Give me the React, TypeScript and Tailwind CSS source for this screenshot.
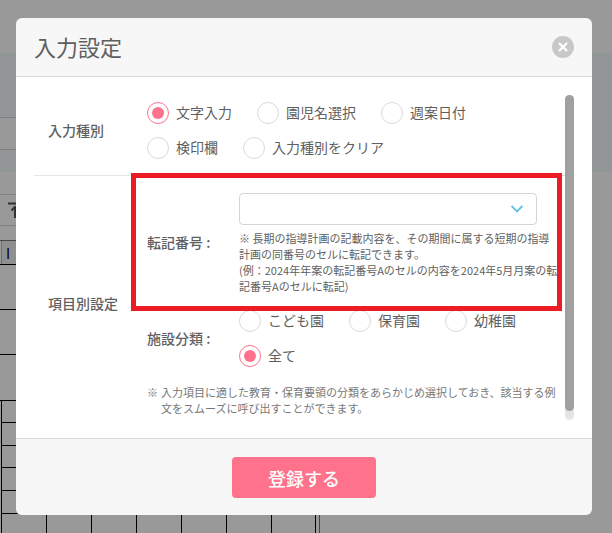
import React from 'react';
import { clsx } from 'clsx';

type RadioOption = {
  value: string;
  label: string;
};

type RadioListProps = {
  name: string;
  label: string;
  options: RadioOption[];
  defaultValue: string;
};

const INPUT_TYPES: RadioOption[] = [
  { value: 'text', label: '文字入力' },
  { value: 'child', label: '園児名選択' },
  { value: 'week', label: '週案日付' },
  { value: 'stamp', label: '検印欄' },
  { value: 'clear', label: '入力種別をクリア' },
];

const FACILITIES: RadioOption[] = [
  { value: 'kodomoen', label: 'こども園' },
  { value: 'hoikuen', label: '保育園' },
  { value: 'yochien', label: '幼稚園' },
  { value: 'all', label: '全て' },
];

const TRANSFER_NUMBERS = ['A', 'B', 'C', 'D', 'E'];

const ROW_HEIGHTS = ['h-[22px]', 'h-[23px]', 'h-[22px]', 'h-[23px]', 'h-[23px]'];

const RadioList = ({ name, label, options, defaultValue }: RadioListProps) => (
  <div
    role="radiogroup"
    aria-label={label}
    className="flex min-w-0 flex-1 flex-wrap gap-x-[25px] gap-y-[13px] pr-4"
  >
    {options.map((option) => (
      <label key={option.value} className="flex items-start gap-[7px] leading-5">
        <input
          type="radio"
          name={name}
          value={option.value}
          defaultChecked={option.value === defaultValue}
          className="peer sr-only"
        />
        <span className="flex size-[22px] items-center justify-center rounded-full border border-[#d9d9d9] bg-white text-transparent peer-checked:border-[#ff728c] peer-checked:text-[#ff728c]">
          <span className="size-3 rounded-full bg-current" />
        </span>
        {option.label}
      </label>
    ))}
  </div>
);

// ======================= Sheet behind =======================
const Sheet = () => (
  <div aria-hidden="true" className="flex min-h-screen flex-col bg-white">
    <div className="h-[53px]" />
    <div className="h-16 bg-[#f3fbfc]" />
    <div className="flex h-[33px] bg-[#f3fbfc]">
      <div className="w-1/2 border-y border-[#d2d6d8] bg-white" />
    </div>
    <div className="h-[22px] bg-[#f3fbfc]" />
    <div className="flex flex-1 flex-col items-start">
      <div className="h-[23px] w-80 border-b border-[#d8d8d8]" />
      <div className="flex h-[31px] w-80 items-center border-b border-[#d8d8d8] pl-[7px]">
        <svg width="16" height="16" viewBox="0 0 16 16" fill="none" stroke="#555" strokeWidth="2">
          <path d="M1 1.500h14M8 16V6M4.500 8.500 8 5l3.500 3.500" />
        </svg>
      </div>
      <div className="h-[15px] w-80 border-b border-[#777]" />
      <div className="flex h-6 w-80 items-center border-b border-black pl-px text-black">
        <div className="flex h-full flex-1 items-center border-l border-[#bbb] bg-[#eee] pl-1">
          I
        </div>
      </div>
      <div className="h-[45px] w-80 border-b border-black" />
      <div className="h-[45px] w-80 border-b border-black" />
      <div className="h-[46px] w-80 border-b border-black" />
      <div className="flex w-80 flex-1 border-r border-[#777] pr-[2px] pl-px">
        {Array.from({ length: 7 }, (_, col) => (
          <div
            key={col}
            className={clsx('flex w-[45px] flex-col border-l border-black', col === 6 && 'border-r')}
          >
            {ROW_HEIGHTS.map((height, row) => (
              <div key={row} className={clsx('shrink-0 border-b border-black', height)} />
            ))}
          </div>
        ))}
      </div>
    </div>
  </div>
);

// ========================== Dialog ==========================
const SettingsDialog = () => (
  <form
    role="dialog"
    aria-labelledby="dialog-title"
    className="flex w-full max-w-[720px] flex-col overflow-hidden rounded-md bg-[#f7f7f7]"
    onSubmit={(e) => e.preventDefault()}
  >
    <header className="flex items-center justify-between border-b border-[#d9d9d9] px-[18px] py-3">
      <h1 id="dialog-title" className="pb-[2px] text-[22px] leading-8">
        入力設定
      </h1>
      <button
        type="button"
        aria-label="閉じる"
        className="flex size-[22px] items-center justify-center rounded-full bg-[#c8c8c8]"
      >
        <svg width="10" height="10" viewBox="0 0 10 10" stroke="#fff" strokeWidth="2.400">
          <path d="m1 1 8 8M9 1 1 9" />
        </svg>
      </button>
    </header>

    <div className="flex bg-white p-[18px]">
      <div className="min-w-0 flex-1">
        <section className="flex items-center border-b border-[#e5e5e5] pt-[7px] pb-4">
          <h2 className="w-[113px] shrink-0 pb-[2px] pl-[14px] font-medium">入力種別</h2>
          <RadioList
            name="inputType"
            label="入力種別"
            options={INPUT_TYPES}
            defaultValue="text"
          />
        </section>

        <section className="flex items-center pt-[17px] pb-1">
          <h2 className="w-[113px] shrink-0 pb-1 pl-[14px] font-medium">項目別設定</h2>
          <div className="flex min-w-0 flex-1 flex-col">
            <div className="relative flex items-center">
              <label htmlFor="transfer" className="w-[92px] shrink-0 pb-1 font-medium">
                転記番号 :
              </label>
              <div className="min-w-0 flex-1">
                <div className="mr-7 grid items-center">
                  <select
                    id="transfer"
                    defaultValue=""
                    className="col-start-1 row-start-1 h-8 appearance-none rounded-sm border border-[#d5d5d5] bg-white px-3"
                  >
                    <option value="" />
                    {TRANSFER_NUMBERS.map((no) => (
                      <option key={no}>{no}</option>
                    ))}
                  </select>
                  <svg
                    className="pointer-events-none col-start-1 row-start-1 mr-[14px] justify-self-end"
                    width="12"
                    height="8"
                    viewBox="0 0 12 8"
                    fill="none"
                    stroke="#62c3dc"
                    strokeWidth="1.800"
                  >
                    <path d="m.6 1 5.400 5.400L11.400 1" />
                  </svg>
                </div>
                <p className="mt-[5px] text-[11px] leading-4">
                  ※ 長期の指導計画の記載内容を、その期間に属する短期の指導
                  <br />
                  計画の同番号のセルに転記できます。
                  <br />
                  (例：2024年年案の転記番号Aのセルの内容を2024年5月月案の転
                  <br />
                  記番号Aのセルに転記)
                </p>
              </div>
              <div className="pointer-events-none absolute -top-5 right-[3px] bottom-[-17px] -left-4 border-[5px] border-[#ed1c24]" />
            </div>

            <div className="mt-4 flex items-center">
              <h3 className="w-[92px] shrink-0 pb-[2px] font-medium">施設分類 :</h3>
              <RadioList
                name="facility"
                label="施設分類"
                options={FACILITIES}
                defaultValue="all"
              />
            </div>

            <p className="mt-[17px] flex gap-[3px] text-[11px] leading-4 text-[#777]">
              <span>※</span>
              <span>
                入力項目に適した教育・保育要領の分類をあらかじめ選択しておき、該当する例
                <br />
                文をスムーズに呼び出すことができます。
              </span>
            </p>
          </div>
        </section>
      </div>
      <div className="flex w-[9px] shrink-0 flex-col rounded-full bg-[#e5e5e5] pb-[9px]">
        <div className="flex-1 rounded-full bg-[#a0a0a0]" />
      </div>
    </div>

    <footer className="flex justify-center border-t border-[#d9d9d9] pt-[18px] pb-[17px]">
      <button
        type="submit"
        className="h-[41px] w-36 rounded-sm bg-[#ff728c] text-lg font-medium text-white"
      >
        登録する
      </button>
    </footer>
  </form>
);

export default function App() {
  return (
    <div className="relative font-['Noto_Sans_CJK_JP',sans-serif] text-sm text-[#5f5f5f]">
      <Sheet />
      <div className="absolute inset-0 flex items-start justify-center bg-black/40 py-[18px] pr-5 pl-4">
        <SettingsDialog />
      </div>
    </div>
  );
}
